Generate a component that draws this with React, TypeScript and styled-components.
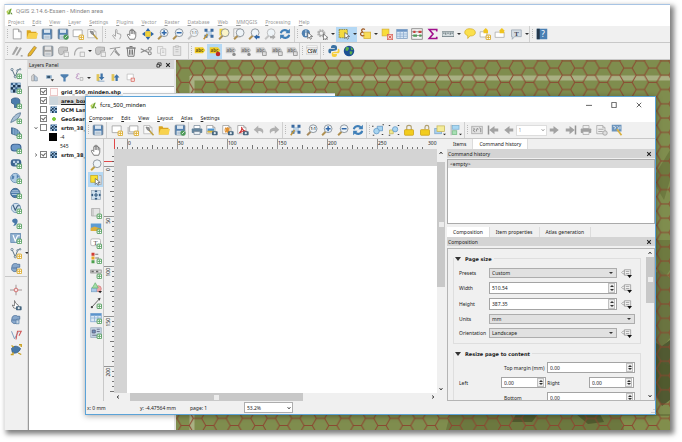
import React, { ReactNode } from "react";
import styled, { createGlobalStyle, css } from "styled-components";

const GlobalStyle = createGlobalStyle`
  *, *::before, *::after { box-sizing: border-box; }
  body { margin: 0; background: #fff; }
  body, button, input, select { font-family: "Noto Sans", "Open Sans", sans-serif; font-size: 5px; line-height: 8px; color: #222; }
`;

/* ---------- icons ---------- */

const Plus = ({ gold = false }: { gold?: boolean }) => (
  <g>
    <rect x="9.5" y="9.5" width="6" height="6" rx="1" fill="#fff" stroke={gold ? "#d8a520" : "#4d9a57"} strokeWidth="1.3" />
    <path d="M12.5 10.5v4M10.5 12.5h4" stroke={gold ? "#e0b030" : "#5fa868"} strokeWidth="1.3" />
  </g>
);
const Sheet = ({ x = 1, y = 2, fill = "#fff", stroke = "#999" }: { x?: number; y?: number; fill?: string; stroke?: string }) => (
  <path d={`M${x} ${y}h8l3 3v8h-11z M${x + 8} ${y}v3h3`} fill={fill} stroke={stroke} />
);
const Floppy = ({ c = "#5481b0", light = "#dbe6f0" }: { c?: string; light?: string }) => (
  <g>
    <rect x="1.5" y="1.5" width="13" height="13" rx="1" fill={c} stroke="#6c7f90" />
    <rect x="4" y="2" width="8" height="4.5" fill={light} />
    <rect x="3.5" y="9" width="9" height="5.5" fill={light} />
    <path d="M4.5 11h7M4.5 13h7" stroke="#8a9aa8" strokeWidth=".7" />
  </g>
);
const Lens = ({ children, fill = "#eef4f8", stroke = "#808890", handle = "#b09050" }: { children?: ReactNode; fill?: string; stroke?: string; handle?: string }) => (
  <g>
    <path d="M6.5 10 1.5 15" stroke={handle} strokeWidth="2.6" />
    <circle cx="9.5" cy="6.3" r="5.2" fill={fill} stroke={stroke} strokeWidth="1.1" />
    {children}
  </g>
);
const Vee = ({ c = "#5b7384" }: { c?: string }) => (
  <g stroke={c} fill="#dfe7ee">
    <path d="M3 4l4 9 3-8c1-2 2-2 3-2" fill="none" strokeWidth="1.3" />
    <circle cx="2.7" cy="3.4" r="1.5" /><circle cx="7" cy="13" r="1.5" /><circle cx="10" cy="4.5" r="1" /><circle cx="13.5" cy="3" r="1" />
  </g>
);
const Checker = () => (
  <g>
    <rect x="1" y="1" width="13" height="13" fill="#36608a" />
    <path d="M1 4h3v3H1zM4 1h3v3H4zM7 4h3v3H7zM10 1h4v3h-4zM4 7h3v3H4zM10 7h4v3h-4zM7 10h3v4H7zM1 10h3v4H1z" fill="#9fbfdc" />
    <path d="M4 4h3v3H4zM10 4h4v3h-4zM1 7h3v3H1zM4 10h3v4H4z" fill="#1c3650" />
  </g>
);
const Hand = ({ c = "#444", fill = "#fff" }: { c?: string; fill?: string }) => (
  <path d="M5 15 2 10c-1-2 1-2 2-1l1 1V4c0-1.500 2-1.500 2 0V2.500c0-1.500 2-1.500 2 0V4c0-1.500 2-1.300 2 0v1.500c0-1 2-1 2 .5v5l-1.500 4z M7 4v4M9 4v4M11 5.500v3" fill={fill} stroke={c} strokeWidth=".9" />
);
const Cursor = ({ x = 8, y = 6 }: { x?: number; y?: number }) => (
  <path d={`M${x} ${y}v8l2-2 1.500 3 1.500-1-1.500-2.700h3z`} fill="#fff" stroke="#555" strokeWidth=".9" />
);
const Pencil = ({ c = "#e8b62c", d = "#806020" }: { c?: string; d?: string }) => (
  <g><path d="M3 12 11 1.500l3 2-7.500 10.500-4 1z" fill={c} stroke={d} strokeWidth=".7" /></g>
);
const Cyl = () => (
  <path d="M3 4c2-3 7-2 7-1h3v4H9v5c-3 2-7 0-7-3z M3 8h6" fill="#88a8cc" stroke="#456a94" />
);
const Arr = ({ flip = false, bar = false }: { flip?: boolean; bar?: boolean }) => (
  <g transform={flip ? "translate(16 0) scale(-1 1)" : undefined}>
    <path d="M1 6h5V2.500L13 8l-7 5.500V10H1z" fill="#a2a2a2" />
    {bar && <path d="M14 2v12" stroke="#949494" strokeWidth="2" />}
  </g>
);
const Pad = ({ open = false }: { open?: boolean }) => (
  <g>
    <path d={open ? "M8 7V4c0-3 5-3 5 0v3" : "M5 8V4c0-3 6-3 6 0v4"} fill="none" stroke="#b0a070" strokeWidth="1.500" />
    <rect x="2" y="7.500" width="12" height="7.500" rx="1" fill="#f2cc1e" stroke="#c99d12" />
  </g>
);
const Camera = () => <g><rect x="8" y="9.500" width="7.500" height="5.500" rx="1" fill="#46667f" /><circle cx="11.700" cy="12.300" r="1.500" fill="#dfe8ee" /></g>;
const Label = ({ c = "#c8c8c8", t = "#777" }: { c?: string; t?: string }) => (
  <g><path d="M1 3h11l3 4-3 4H1z" fill={c} /><text x="2" y="9.200" fontSize="6" fontWeight="700" fill={t}>abc</text></g>
);
const Four = () => (
  <g fill="#3a6aa0"><path d="M4 4h8v7H4z" fill="#bcd2e6" /><path d="M2 1h4v4H2zM10 1h4v4h-4zM2 9h4v4H2zM10 9h4v4h-4z" /><path d="M6 8l-5 7" stroke="#c0963c" strokeWidth="2" /></g>
);

const icons: Record<string, ReactNode> = {
  page: <path d="M3 1.500h7L13.500 5v9.500H3z M10 1.500V5h3.500" fill="#fff" stroke="#8c8c8c" />,
  folder: <g><path d="M1 3h5l1 2h7v9H1z" fill="#d9a520" /><path d="M3.500 6.500H16L14 14H1z" fill="#f8d24e" /></g>,
  save: <Floppy />,
  saveAs: <g><Floppy /><circle cx="12" cy="12" r="3.500" fill="#4d9a57" /><path d="M10.500 13.500 14 10" stroke="#fff" /></g>,
  saveGrey: <Floppy c="#a5a5a5" light="#e5e5e5" />,
  newComp: <g><path d="M1.500 2.500h12v9h-12z" fill="#fff" stroke="#999" /><Plus gold /></g>,
  dupComp: <g><path d="M1.500 4v9h11" stroke="#999" fill="none" /><path d="M3.500 2.500h11v8h-11z" fill="#fff" stroke="#999" /><Plus gold /></g>,
  manager: <g><Sheet fill="#fafafa" stroke="#b0b0b0" /><path d="M8 8l6 7" stroke="#c0a040" strokeWidth="2" /><path d="M4 4l4 1 1 4-3-1z" fill="#999" stroke="#777" /></g>,
  touch: <path d="M6 15 2 10l1-1 3 2V3c0-1.500 2-1.500 2 0v4l5 1.500v3L11.500 15" fill="#f4f4f4" stroke="#999" strokeWidth="1.100" />,
  hand: <Hand />,
  panSel: <g fill="#2f66a8"><rect x="5" y="5" width="6" height="6" fill="#f2d43a" stroke="#c8a81c" /><path d="M8 0l3 4H5zM8 16l3-4H5zM0 8l4-3v6zM16 8l-4-3v6z" /></g>,
  zoomIn: <Lens><path d="M9.500 3v6.600M6.200 6.300h6.600" stroke="#2f66a8" strokeWidth="2" /></Lens>,
  zoomOut: <Lens><path d="M6.200 6.300h6.600" stroke="#2f66a8" strokeWidth="2" /></Lens>,
  zoomOne: <Lens handle="#c4c4c4" stroke="#aaa"><text x="6" y="8.300" fontSize="5" fontWeight="700" fill="#888">1:1</text></Lens>,
  zoomReal: <Lens handle="#a88c60"><text x="6" y="8.300" fontSize="5" fontWeight="700" fill="#444">1:1</text></Lens>,
  zoomFull: <Four />,
  zoomSel: <g><path d="M2 1h7v9H2z" fill="#f2d43a" /><Lens fill="#faf4c8" /></g>,
  zoomLayer: <g><path d="M1 1h9v11H1z" fill="#f2f2f2" stroke="#aaa" /><Lens /></g>,
  zoomLast: <g><Lens /><path d="M8 12l4-3.500v2h3.500v3H12v2z" fill="#2f66a8" /></g>,
  zoomNext: <g><Lens stroke="#b4b4b4" handle="#c4c4c4" /><path d="M15.500 12l-4-3.500v2H8v3h3.500v2z" fill="#aaa" /></g>,
  refresh: <g fill="none" stroke="#3f7fb8" strokeWidth="2.800"><path d="M2.500 7C3 3 9 1 12 5" /><path d="M13.500 9C13 13 7 15 4 11" /><path d="M14.500 1v6h-6z M1.500 15V9h6z" fill="#3f7fb8" stroke="none" /></g>,
  identify: <g><circle cx="6.500" cy="7" r="5.500" fill="#4f80b0" /><path d="M6.500 6v4.500M6.500 3.200v1.500" stroke="#fff" strokeWidth="1.800" /><Cursor x={9} /></g>,
  action: <g><circle cx="7" cy="7" r="4" fill="none" stroke="#b4b4b4" strokeWidth="3" strokeDasharray="2.200 1" /><circle cx="7" cy="7" r="3" fill="none" stroke="#aaa" strokeWidth="1.500" /><Cursor x={10} y={8} /></g>,
  select: <g><rect x="1.500" y="2" width="11" height="11" fill="#f4da3e" stroke="#7c7440" strokeDasharray="2 1" /><Cursor x={9} /></g>,
  expr: <g><rect x="6.500" y="5.500" width="9" height="8.500" fill="#f8dc58" stroke="#d8b030" /><path d="M8 2C4 0 2 3 5 5.500 0 6 2 12 7 10" fill="none" stroke="#a05a20" strokeWidth="1.600" /></g>,
  deselect: <g><rect x="1.500" y="1.500" width="9" height="9" fill="#f8dc38" stroke="#d8b030" /><rect x="8.500" y="8.500" width="7" height="7" fill="#f8ccc4" stroke="#d8645c" /><path d="M10 10l4 4M14 10l-4 4" stroke="#d04a40" /></g>,
  table: <g><rect x="1" y="2" width="14" height="12" fill="#d8e6f4" stroke="#7c9cc0" /><path d="M1 3.500h14" stroke="#6c94c4" strokeWidth="3" /><path d="M1 8h14M1 11h14M5.500 4v10M10 4v10" stroke="#8cacd0" /></g>,
  abacus: <g><rect x="1" y="1" width="14" height="14" fill="#f4f4f4" stroke="#777" /><path d="M1 5h14M1 10h14" stroke="#777" /><path d="M3 5h3M10 5h4" stroke="#c8403c" strokeWidth="3" /><path d="M3 10h5M11 10h3" stroke="#4d9a57" strokeWidth="3" /></g>,
  sigma: <path d="M13 4.500V2H3l5 6-5 6h10v-2.500" fill="none" stroke="#a0108c" strokeWidth="2.200" />,
  measure: <g><rect x="0" y="5" width="16" height="6.500" fill="#d4dcde" stroke="#66767c" /><path d="M2.500 6v2M5 6v3M8 6v2M11 6v3M13.500 6v2" stroke="#44545c" /></g>,
  bubble: <path d="M2 3c2-3 12-3 13 2s-5 6-7 5.500L5 14v-4C1 9 0 6 2 3z" fill="#fbe04c" stroke="#d4b02c" />,
  bookNew: <g><path d="M1.500 5h9v7h-9z" fill="#fff" stroke="#aaa" /><path d="M9 0l3 3v4H6V3z" fill="#f0c420" /><Plus gold /></g>,
  book: <g><path d="M1.500 5.500h12v7h-12z" fill="#fff" stroke="#aaa" /><path d="M10.500 0l3 3v4h-6V3z" fill="#f0c420" /></g>,
  text: <g><path d="M2 2.500h13v9H6L3 15v-3.500H2z" fill="#d4dce4" stroke="#98a4b0" /><text x="5.500" y="10" fontSize="9" fontWeight="700" fill="#445" fontFamily="Liberation Serif">T</text></g>,
  help: <g><rect x="1" y="1" width="14" height="14" fill="#4a80b4" /><rect x="1" y="1" width="4" height="14" fill="#24384c" /><text x="7" y="12" fontSize="11" fill="#fff">?</text></g>,
  pens: <g><path d="M1 13 7 2l3 1-6 10zM6 14l6-11 2.500 1-6 10z" fill="#a4a4a4" /><path d="M13 14.500h2.500" stroke="#555" /></g>,
  pencil: <Pencil />,
  addFeat: <g><path d="M2 6c0-5 7-3 12-3v5H9c0 3-1 5-4 5S2 9 2 6z" fill="#c8c8c8" stroke="#999" /><path d="M9.500 9.500h6v6h-6z" fill="#eee" stroke="#aaa" /></g>,
  curve: <g><path d="M2 14C2 6 6 3 13 4" fill="none" stroke="#aaa" strokeWidth="1.500" /><path d="M9.500 9.500h6v6h-6z" fill="#eee" stroke="#aaa" /></g>,
  node: <g fill="none" stroke="#999" strokeWidth="1.300"><path d="M1 5l14-2M9 4 2 14M8 5l3 5" /><path d="M8 8l6 6" strokeWidth="2.500" /></g>,
  trash: <g fill="none" stroke="#777" strokeWidth="1.300"><path d="M3 4h10l-1 11H4zM1.500 4h13M6 2h4M6 6v7M8 6v7M10 6v7" /></g>,
  cut: <g fill="none" stroke="#8c8c8c" strokeWidth="1.500"><path d="M1 5l10 5M1 10l9-4" /><circle cx="13" cy="5" r="2" /><circle cx="13" cy="11" r="2" /></g>,
  copy: <g fill="#eee" stroke="#c0c0c0"><path d="M2 2h7v9H2z" /><path d="M6 5h7v9H6zM8 8h3M8 10h3" /></g>,
  paste: <g fill="#e4e4e4" stroke="#b8b8b8"><path d="M3 2h10v12H3z" /><path d="M6 1h4v2H6zM6 6h4M6 9h4" /></g>,
  label: <Label c="#f3cf2a" t="#6a5a10" />,
  labelPin: <g><Label c="#f3cf2a" t="#6a5a10" /><circle cx="12" cy="12" r="3" fill="#c02828" /></g>,
  labelGrey: <g><Label /><circle cx="12" cy="12.500" r="2.300" fill="#8c8c8c" /></g>,
  labelMove: <g><Label /><path d="M10 9h5v5h-5z" fill="#e0e0e0" stroke="#888" /></g>,
  csw: <g><path d="M1 1h14v3H1z" fill="#fff" stroke="#ccc" /><rect x="0" y="4" width="16" height="8" fill="#fff" stroke="#bbb" /><text x="1.500" y="10.200" fontSize="6" fontWeight="700" fill="#444">CSW</text></g>,
  python: <g><path d="M8 0C4 0 4 2 4 4h5v1H2C0 5 0 11 2 11h2V9c0-2 8 0 8-4V3c0-2-2-3-4-3z" fill="#3a72a4" /><path d="M8 16c4 0 4-2 4-4H7v-1h7c2 0 2-6 0-6h-1v3c0 2-8 0-8 3v2c0 2 1 3 3 3z" fill="#f7cf3c" /></g>,
  globe: <g><circle cx="8" cy="8" r="7" fill="#1d4f94" /><path d="M4 3c3-1 4 0 4 2L6 8 3 7zM9 8l4 1-2 4-2-1zM10 2l4 4-3 1z" fill="#5cb04c" /></g>,
  vector: <g><Vee /><Plus /></g>,
  raster: <g><Checker /><Plus /></g>,
  elephant: <g><path d="M2 3c4-3 10-2 11 1v6H9v4H6v-4L2 8z" fill="#4c7cac" stroke="#31587f" /><Plus /></g>,
  feather: <g><path d="M1 14C3 7 8 2 14 1c0 5-5 10-13 13z" fill="#a8bfd4" stroke="#4c6c8c" /><Plus /></g>,
  shell: <g><path d="M2 1c8 1 12 5 12 12L2 9z" fill="#5c88b4" stroke="#31587f" /><path d="M5 2v8M8 3v8M11 5v7" stroke="#a8c4dc" /><Plus /></g>,
  oracle: <g><rect x="1.500" y="3" width="13" height="9" rx="4" fill="#6c98c8" stroke="#3c6494" strokeWidth="1.500" /><Plus /></g>,
  oraster: <g><rect x="1" y="3" width="14" height="9.500" rx="4" fill="#3c6490" /><path d="M4 5h3v3H4zM9 5h3v3H9zM6.500 8h3v3h-3z" fill="#bcd2e6" /><Plus /></g>,
  globe1: <g><circle cx="7" cy="8" r="6.200" fill="#b0cce4" stroke="#5c84ac" /><path d="M3 4l3 2-1 3-3 1M9 3l3 3-3 3" fill="#5482b0" /><Plus /></g>,
  globe2: <g><circle cx="7" cy="8" r="6.200" fill="#4c7cac" stroke="#31587f" /><path d="M1.500 7h11M2.500 10h9M3 5h8" stroke="#d0e0ee" /><Plus /></g>,
  globe3: <g><circle cx="8" cy="8" r="6.200" fill="#d0e0ee" stroke="#5c84ac" /><path d="M4 4l3 7 3-6h3" fill="none" stroke="#3c5c7c" strokeWidth="1.500" /><Plus /></g>,
  comma: <g><path d="M4 3c5-3 8 2 5 6-1 2-3 3-5 3 2-2 2-3 2-4-3 0-4-4-2-5z" fill="#4878a8" /><Plus /></g>,
  virtual: <g><rect x="1" y="2" width="13" height="12" fill="#90b0d0" stroke="#5c84ac" /><path d="M4 4l3 8 3-7h3" fill="none" stroke="#fff" strokeWidth="1.500" /><Plus /></g>,
  vectorGold: <g><Vee /><Plus gold /></g>,
  gpsGold: <g><Cyl /><Plus gold /></g>,
  cross: <g><path d="M8 1v14M0 8h16" stroke="#8c7c7c" /><circle cx="8" cy="8" r="2.500" fill="#f8e4e4" stroke="#c85050" /></g>,
  touchGps: <g><path d="M5 12 3 8l3 1V2l2 4 3 2v5z" fill="#fff" stroke="#666" /><Camera /></g>,
  gps: <g><Cyl /><path d="M8 8h4v5H8z" fill="#c4d4e4" stroke="#5c84ac" /></g>,
  topology: <g><path d="M2 3l4 10 5-9" fill="none" stroke="#7c9cc0" strokeWidth="1.300" /><path d="M8 14l2-11h5l-3 6" fill="none" stroke="#d05858" strokeWidth="1.400" /></g>,
  georef: <g><path d="M2 6c4-5 9-3 12 0-1 5-8 8-11 5z" fill="#4878a8" stroke="#31587f" /><path d="M1 14h3v-3M12 1h3v3M11 12l4 2M2 2l3 2" stroke="#c8a020" strokeWidth="1.800" fill="none" /></g>,
  print: <g><path d="M4 2h8v4H4z" fill="#fff" stroke="#7c8c9c" /><rect x="1" y="6" width="14" height="6" rx="1" fill="#64849c" /><path d="M4 10h8v4H4z" fill="#e8eef2" stroke="#7c8c9c" /></g>,
  printGrey: <g><path d="M4 2h8v4H4z" fill="#eee" stroke="#aaa" /><rect x="1" y="6" width="14" height="6" rx="1" fill="#a0a0a0" /><path d="M4 10h8v4H4z" fill="#eee" stroke="#aaa" /></g>,
  expImg: <g><Sheet /><path d="M2 6h9v5H2z" fill="#4c94d0" /><path d="M2 9h9v2.500H2z" fill="#e4b838" /><Camera /></g>,
  expSvg: <g><Sheet /><path d="M7 4v8M3 8h8M4 5l6 6M10 5l-6 6" stroke="#e09030" strokeWidth="1.500" /><Camera /></g>,
  expPdf: <g><Sheet /><path d="M3 12c3-2 4-6 3-8 1 4 4 6 7 6-4-1-7 0-10 2z" fill="none" stroke="#cc3030" strokeWidth="1.400" /><Camera /></g>,
  undo: <path d="M7 2v3c6 0 8 3 6 8-1-3-3-4-6-3.500V13L1 7.500z" fill="#b0b0b0" />,
  redo: <path d="M9 2v3C3 5 1 8 3 13c1-3 3-4 6-3.500V13l6-5.500z" fill="#b0b0b0" />,
  group: <g fill="#a8d4f0" stroke="#5c94c4"><path d="M7 3h7v6H7z" /><circle cx="6" cy="9.500" r="3.700" /><path d="M0 3h2M1 15h2M13 14h2M14 1h2" stroke="#444" strokeWidth="1.500" /></g>,
  ungroup: <g fill="#a8d4f0" stroke="#5c94c4"><path d="M2 8h5v5H2z" fill="#f0e890" stroke="#c4b458" /><circle cx="9.500" cy="7" r="3.500" /><path d="M1 2h2M1 15h2M13 14h2M13 2h2" stroke="#444" strokeWidth="1.500" /></g>,
  lock: <Pad />,
  unlock: <Pad open />,
  raise: <g><rect x="1" y="6" width="9" height="7" fill="#a8d0f0" stroke="#7ca4c8" /><rect x="4" y="2.500" width="10" height="7.500" fill="#f4ec98" stroke="#c4b458" /><path d="M12 13h4l-2 2z" fill="#222" /></g>,
  align: <g><path d="M1.500 1v14" stroke="#999" /><rect x="3" y="2" width="9" height="5" fill="#a8d8f4" stroke="#7cb0d0" /><rect x="3" y="9" width="6" height="5" fill="#a8e0b4" stroke="#74b884" /><path d="M12 13h4l-2 2z" fill="#222" /></g>,
  atlas: <g><rect x="1" y="3" width="14" height="10" fill="#e2e2e2" stroke="#a4a4a4" /><path d="M3 5l2 2-2 1 2 3M7 10l1-4 2 1M11 5l2 1v5" stroke="#8c8c8c" strokeWidth="1.300" fill="none" /></g>,
  next: <Arr />, prev: <Arr flip />, last: <Arr bar />, first: <Arr flip bar />,
  expGrey: <g><Sheet fill="#eee" stroke="#a4a4a4" /><path d="M3 7h7M3 10h6" stroke="#aaa" strokeWidth="1.500" /><circle cx="12" cy="12" r="3" fill="#ddd" stroke="#999" /></g>,
  atlasSet: <g><path d="M1 1h13v9H1z" fill="#6c94bc" /><path d="M3 3l3 1-1 3M8 3l2 2-1 3M12 3v4" stroke="#dce8f2" fill="none" strokeWidth="1.300" /><path d="M8 7l6 8" stroke="#d8b040" strokeWidth="2.300" /></g>,
  moveContent: <g><rect x="2" y="2" width="12" height="12" fill="#cfe0ee" stroke="#9ab" /><path d="M8 5v6M5 8h6" stroke="#31587f" strokeWidth="1.500" /><path d="M8 1l2 3H6zM8 15l2-3H6zM1 8l3-2v4zM15 8l-3-2v4z" fill="#31587f" /></g>,
  selItem: <g><rect x="1" y="2" width="9" height="9" fill="#f8e030" stroke="#c8a81c" /><path d="M12 2h3v12h-4" fill="#ddd" stroke="#aaa" /><Cursor x={7} y={6} /></g>,
  lens: <Lens handle="#c0a040" />,
  addMap: <g><path d="M2 2h11v10H2zM4 2v10" fill="#e4e4e4" stroke="#aaa" /><Plus /></g>,
  addImg: <g><rect x="1" y="2" width="14" height="10" fill="#5c9cd4" /><path d="M1 8l5-2 9 3v3H1z" fill="#dcae3c" /><Plus /></g>,
  addLabel: <g><rect x="1" y="2.500" width="13" height="9" rx="2" fill="#fff" stroke="#aaa" /><text x="4.500" y="10" fontSize="9" fill="#444" fontFamily="Liberation Serif">T</text><Plus /></g>,
  addLegend: <g><path d="M2 1h4v4H2z" fill="#d03c30" /><path d="M2 6h4v4H2z" fill="#e8a828" /><path d="M2 11h4v4H2z" fill="#4da04c" /><path d="M7 3h4M7 8h5" stroke="#555" /><Plus /></g>,
  addScale: <g><rect x="1" y="4" width="14" height="4" fill="#ddd" stroke="#888" /><path d="M2 6h3M8 6h3" stroke="#666" strokeWidth="2" /><Plus /></g>,
  addShape: <g><circle cx="11" cy="9" r="4" fill="#f0a8a8" stroke="#d07c7c" /><rect x="2" y="8" width="7" height="5" fill="#a8c8e8" stroke="#7ca4c8" /><path d="M7 1l4 7H3z" fill="#a4e0a8" stroke="#6cb474" /><path d="M11 12h5l-2.500 3z" fill="#222" /></g>,
  addArrow: <g><path d="M2 14 13 2" stroke="#555" strokeWidth="1.200" /><circle cx="2.500" cy="13.500" r="1.500" fill="#444" /><path d="M14 1l-1 4-3-3z" fill="#444" /><Plus /></g>,
  addTable: <g><rect x="1" y="2" width="14" height="11" fill="#dce8f4" stroke="#7ca4d0" /><path d="M1 3.500h14" stroke="#5c94cc" strokeWidth="3" /><path d="M1 8h14M6 4v9M10.500 4v9" stroke="#8cb0d4" /><Plus /></g>,
  addHtml: <g><rect x="1" y="1" width="14" height="13" fill="#c4d4e4" stroke="#9ab" /><path d="M3 4h4v4H3zM9 3h4M9 6h4M3 11h6" stroke="#557" fill="#6c94bc" /><Plus /></g>,
  styleDock: <g><path d="M3 14V5l4-3v12z" fill="#ddd" stroke="#888" /><path d="M8 4l5 4v6H8z" fill="#bcd" stroke="#789" /></g>,
  eye: <g><path d="M2 4h10v6H2z" fill="#8cacc8" /><path d="M4 5h5v4H4z" fill="#35536c" /><path d="M10 11h6l-3 4z" fill="#333" /></g>,
  filter: <path d="M1 2h14v3L10 9v6H6V9L1 5z" fill="#4f80b0" />,
  exprFilter: <g fill="none"><path d="M8 2C4 0 2 3 5 5.500 0 6 2 12 7 10" stroke="#b080b8" strokeWidth="1.600" /><path d="M9 8h5v5H9z" stroke="#999" /></g>,
  expand: <g><path d="M1 2h5v12H1z" fill="#e0c458" /><path d="M8 1h4v6h3l-5 6-5-6h3z" fill="#3f73a8" /><path d="M3 14.500h12" stroke="#3f73a8" /></g>,
  collapse: <g><path d="M1 2h5v12H1z" fill="#e0c458" /><path d="M8 14h4V8h3l-5-6-5 6h3z" fill="#3f73a8" /></g>,
  remove: <g><path d="M2 2h11v10H2z" fill="#fff" stroke="#aaa" /><rect x="9" y="9" width="6" height="6" fill="#f8d8d4" stroke="#d04a40" /></g>,
  dataDef: <g fill="none"><path d="M5 2.500h9v8H5zM5 4.500H3l-2 2 2 2h2M7 5h5M7 8h5" stroke="#8c8c8c" /><path d="M9 10h7l-3.500 4.500z" fill="#111" /></g>,
  checker: <Checker />,
};

const Svg = styled.svg<{ $s: number }>`
  display: block;
  flex: none;
  width: ${(p) => p.$s}px;
  height: ${(p) => p.$s}px;
`;
const Icon = ({ name, size = 12 }: { name: string; size?: number }) => (
  <Svg viewBox="0 0 16 16" $s={size} aria-hidden="true">{icons[name]}</Svg>
);
const Logo = () => (
  <Svg viewBox="0 0 16 16" $s={7} aria-hidden="true">
    <path d="M3 15 9 2l4-1-4 13z" fill="#76a832" /><path d="M1 8l6-5-4 12z" fill="#b4cc50" /><path d="M11 9l4 5h-4z" fill="#4a7c24" />
  </Svg>
);

/* ---------- shared parts ---------- */

const Desktop = styled.div`
  display: flex;
  height: 100vh;
  padding: 4px 12px 12px 4px;
`;
const MainWindow = styled.main`
  position: relative;
  display: flex;
  flex-direction: column;
  flex: 1;
  min-width: 0;
  background: #fff;
  border-top: 1px solid #a8c4e4;
  border-left: 1px solid #e4e4e4;
  box-shadow: 3px 3px 5px 1px rgba(0, 0, 0, 0.5);
`;
const TitleBar = styled.header<{ $tall?: boolean; $muted?: boolean }>`
  display: flex;
  align-items: center;
  flex: none;
  gap: 3px;
  height: ${(p) => (p.$tall ? 16 : 12)}px;
  padding: 0 5px 0 ${(p) => (p.$tall ? 4 : 1)}px;
  font-family: Roboto, sans-serif;
  font-size: 6px;
  color: ${(p) => (p.$muted ? "#888" : "#222")};
`;
const TitleText = styled.h1`
  flex: 1;
  margin: 0;
  font-size: inherit;
  font-weight: 400;
`;
const WinButton = styled.button`
  width: 22px;
  height: 12px;
  padding: 0;
  display: grid;
  place-items: center;
  border: 0;
  background: none;
`;
const MenuBar = styled.nav<{ $muted?: boolean }>`
  display: flex;
  flex: none;
  gap: 8px;
  padding-left: 3px;
  height: 9px;
  button { padding: 0; border: 0; background: none; color: ${(p) => (p.$muted ? "#999" : "#222")}; }
  button::first-letter { text-decoration: underline; }
`;
const Bar = styled.div`
  display: flex;
  flex: none;
  height: 17px;
  background: #f0f0f0;
  border-bottom: 1px solid #c8c8c8;
`;
const Group = styled.div<{ $w: number; $l?: number; $r?: number; $plain?: boolean; $last?: boolean }>`
  display: flex;
  align-items: center;
  justify-content: space-between;
  flex: none;
  width: ${(p) => p.$w}px;
  padding: 0 ${(p) => p.$r ?? 2}px 0 ${(p) => p.$l ?? 6}px;
  border-right: ${(p) => (p.$last ? 0 : 1)}px solid #d0d0d0;
  ${(p) => !p.$plain && css`background: repeating-linear-gradient(#bbb 0 1px, transparent 1px 2px) 2px 3px / 1px 10px no-repeat;`}
`;
const Tool = styled.button<{ $on?: boolean; $drop?: boolean }>`
  display: flex;
  align-items: center;
  flex: none;
  width: ${(p) => (p.$drop ? 21 : 15)}px;
  height: 15px;
  padding: 0 2px;
  gap: 3px;
  border: 0;
  background: ${(p) => (p.$on ? "#b4d8f4" : "none")};
`;
const Caret = styled.i`
  flex: none;
  border: 2px solid transparent;
  border-bottom-width: 0;
  border-top-color: #333;
`;
/* Tool names separated by spaces; "*" marks a pressed tool, "+" one with a menu. */
const tools = (spec: string) =>
  spec.split(" ").map((t, i) => {
    const name = t.replace(/[*+]/g, "");
    const drop = t.includes("+");
    return (
      <Tool key={i} $on={t.includes("*")} $drop={drop} aria-label={name}>
        <Icon name={name} />
        {drop && <Caret />}
      </Tool>
    );
  });

/* ---------- main window body ---------- */

const Body = styled.div`
  display: flex;
  flex: 1;
  min-height: 0;
`;
const SideTools = styled.div`
  display: flex;
  flex-direction: column;
  flex: none;
  width: 23px;
  padding-top: 5px;
  background: #f0f0f0;
  border-right: 1px solid #dcdcdc;
`;
const SideGroup = styled.div`
  display: flex;
  flex-direction: column;
  padding: 0 0 0 3px;
  & + & { margin-top: 1px; padding-top: 5px; border-top: 1px solid #c8c8c8; }
`;
const Layers = styled.section`
  display: flex;
  flex-direction: column;
  flex: none;
  width: 148px;
  border-right: 2px solid #e4e4e4;
`;
const DockTitle = styled.header`
  display: flex;
  align-items: center;
  justify-content: space-between;
  flex: none;
  height: 9px;
  padding: 0 3px 0 1px;
  background: #d4d4d4;
  h2 { margin: 0; font-size: 5px; font-weight: 400; }
  span { display: flex; gap: 3px; }
  button { display: grid; padding: 0; border: 0; background: none; }
`;
const LayerTools = styled.div`
  display: flex;
  align-items: center;
  flex: none;
  gap: 3px;
  height: 17px;
  padding-left: 1px;
  background: #f0f0f0;
  button { width: 12px; padding: 0 1px; }
  button:nth-child(4) { width: 18px; }
`;
const Tree = styled.ul`
  flex: 1;
  margin: 0;
  padding: 0 0 0 3px;
  list-style: none;
  background: #fff;
  border-left: 1px solid #999;
  border-top: 1px solid #aaa;
`;
const TreeRow = styled.li<{ $bold?: boolean; $sel?: boolean }>`
  display: flex;
  align-items: center;
  gap: 2px;
  height: 9px;
  white-space: nowrap;
  ${(p) => p.$bold && css`font-family: "DejaVu Sans", sans-serif; font-weight: 700;`}
  > b { width: 6px; display: grid; place-items: center; }
  label { display: flex; align-items: center; gap: 3px; flex: 1; height: 9px;
    ${(p) => p.$sel && css`text-decoration: underline; background: linear-gradient(90deg, transparent 9px, #dadada 9px);`} }
`;
const Check = styled.input`
  appearance: none;
  position: relative;
  flex: none;
  width: 7px;
  height: 7px;
  margin: 0;
  background: #fff;
  border: 1px solid #808080;
  &:checked::after {
    content: "";
    position: absolute;
    left: 1px;
    top: 0;
    width: 3px;
    height: 4px;
    border: solid #666;
    border-width: 0 1px 1px 0;
    transform: rotate(40deg);
  }
`;
const Swatch = styled.span<{ $c: string; $b?: string; $dot?: boolean }>`
  flex: none;
  width: ${(p) => (p.$dot ? 4 : 8)}px;
  height: ${(p) => (p.$dot ? 4 : 8)}px;
  margin: 0 ${(p) => (p.$dot ? 2 : 0)}px;
  border-radius: ${(p) => (p.$dot ? 50 : 0)}%;
  background: ${(p) => p.$c};
  border: 1px solid ${(p) => p.$b ?? p.$c};
`;
const Legend = styled(TreeRow)`
  gap: 3px;
  padding-left: 17px;
`;
const MapView = styled.svg`
  display: block;
  flex: 1;
  min-width: 0;
  height: 100%;
  background: #7f8d4e;
`;

const MapCanvas = () => (
  <MapView viewBox="0 0 494 370" preserveAspectRatio="xMinYMin slice" aria-label="Map canvas">
    <defs>
      <pattern id="hex" width="24.6" height="14.3" patternUnits="userSpaceOnUse" patternTransform="translate(58.4 0.9)">
        <path d="M0 7.150h4.100L8.200 0h8.200l4.100 7.150h4.100M4.100 7.150l4.100 7.150h8.200l4.100-7.150" fill="none" stroke="#8c4630" strokeWidth="1" />
      </pattern>
    </defs>
    <rect width="494" height="370" fill="#7f8d4e" />
    <path d="M14 18h480M16 16v354" stroke="#a9b083" strokeWidth="5" fill="none" />
    <path d="M270 370l4-16h220v16z" fill="#6c783f" />
    <path d="M476 120l18-30v30l-6 20zM478 180h16v30l-10 14z" fill="#6e7a40" />
    <path d="M476 215l8-5 10 8v60l-8 10-10-8z" fill="#6a7440" />
    <path d="M478 282l8 4 8-6v60l-8 6-8-14z" fill="#515a32" />
    <path d="M480 300l14 6v24l-14-4zM340 354h22l-6 8h-20zM400 354h24l4 8-16 2z" fill="#505a2e" />
    <path d="M444 356h50v14h-46z" fill="#818e4c" />
    <rect width="494" height="370" fill="url(#hex)" />
  </MapView>
);

/* ---------- composer window ---------- */

const Composer = styled.section`
  position: absolute;
  inset: 91px 14px 15px 80px;
  display: flex;
  flex-direction: column;
  background: #f0f0f0;
  border: 1px solid #5ba3d8;
  box-shadow: 0 1px 6px rgba(0, 0, 0, 0.35);
  &::before {
    content: "";
    position: absolute;
    left: 37px;
    top: -4px;
    width: 212px;
    height: 3px;
    background: #f2f6fa;
    border-top: 1px solid #c4c8cc;
  }
`;
const WhiteTop = styled.div`
  flex: none;
  background: #fff;
`;
const ComposerBody = styled.div`
  display: flex;
  flex: 1;
  min-height: 0;
`;
const ToolBox = styled.div`
  display: flex;
  flex-direction: column;
  flex: none;
  width: 18px;
  padding: 3px 0 0 2px;
  border-right: 1px solid #c8c8c8;
  button:nth-child(5) { margin-top: 3px; }
`;
const View = styled.div`
  display: grid;
  grid-template: 10px 1fr 8px / 10px 1fr 8px;
  flex: 1;
  min-width: 0;
`;
const Ruler = styled.svg`
  display: block;
  width: 100%;
  height: 100%;
  min-width: 0;
  min-height: 0;
`;
const Pasteboard = styled.div`
  display: flex;
  min-width: 0;
  min-height: 0;
  padding: 17px 0 0 13px;
  background: #d4d4d4;
`;
const Paper = styled.div`
  flex: 1;
  background: #fff;
`;
const Scroll = styled.div<{ $h?: boolean }>`
  display: flex;
  flex-direction: ${(p) => (p.$h ? "row" : "column")};
  align-items: center;
  background: #f0f0f0;
`;
const Track = styled.div<{ $h?: boolean; $start?: number }>`
  display: flex;
  flex-direction: ${(p) => (p.$h ? "row" : "column")};
  flex: 1;
  align-self: stretch;
  padding: ${(p) => (p.$h ? `0 0 0 ${p.$start ?? 0}px` : `${p.$start ?? 0}px 0 0`)};
`;
const Thumb = styled.div<{ $size: number }>`
  display: grid;
  place-items: center;
  flex: 0 0 ${(p) => p.$size}%;
  background: #c8c8c8;
  &::after { content: ""; width: 5px; height: 5px; background: #ececec; }
`;
const Chevron = styled.svg<{ $turn: number }>`
  flex: none;
  width: 8px;
  height: 8px;
  padding: 2px;
  transform: rotate(${(p) => p.$turn}deg);
`;
const Chev = ({ turn = 0, c = "#333" }: { turn?: number; c?: string }) => (
  <Chevron viewBox="0 0 8 8" $turn={turn}><path d="M1 6l3-4 3 4" fill="none" stroke={c} strokeWidth="1.800" /></Chevron>
);
const Cross = () => (
  <Svg viewBox="0 0 10 10" $s={6}><path d="M2 2l6 6M8 2l-6 6" stroke="#222" strokeWidth="1.800" /></Svg>
);

const ticks = Array.from({ length: 62 }, (_, i) => i - 2);
const tickLength = (i: number) => (i % 10 === 0 ? 10 : i % 5 === 0 ? 4 : 2);
const HRuler = () => (
  <Ruler>
    <path d="M0.500 0v10" stroke="#e04848" />
    {ticks.map((i) => <path key={i} d={`M${13.5 + i * 5} 10v-${tickLength(i)}`} stroke="#555" strokeWidth={i % 10 ? 0.8 : 0.6} />)}
    {[0, 50, 100, 150, 200, 250, 300].map((n) => <text key={n} x={14 + n} y="6" fontSize="5" fill="#222">{n}</text>)}
  </Ruler>
);
const VRuler = () => (
  <Ruler>
    <path d="M0 12.500h10" stroke="#e04848" />
    {ticks.slice(0, 50).map((i) => <path key={i} d={`M10 ${17.5 + i * 5}h-${tickLength(i)}`} stroke="#555" strokeWidth={i % 10 ? 0.8 : 0.6} />)}
    {[0, 50, 100, 150, 200].map((n) => (
      <text key={n} transform={`translate(6 ${19 + n}) rotate(-90)`} textAnchor="end" fontSize="5" fill="#222">{n}</text>
    ))}
  </Ruler>
);

const Docks = styled.aside`
  display: flex;
  flex-direction: column;
  flex: none;
  width: 210px;
  padding-left: 2px;
`;
const Tabs = styled.div<{ $gap?: boolean }>`
  display: flex;
  flex: none;
  height: 10px;
  margin-top: ${(p) => (p.$gap ? 3 : 0)}px;
`;
const Tab = styled.button<{ $on?: boolean }>`
  padding: 0 6px;
  border: 0;
  border-right: 1px solid #dcdcdc;
  background: ${(p) => (p.$on ? "#fff" : "transparent")};
`;
const History = styled.ul`
  flex: none;
  height: 65px;
  margin: 1px 0 0;
  padding: 0;
  list-style: none;
  background: #fff;
  border: 1px solid #aaa;
  li { padding-left: 2px; background: #dadada; }
`;
const Pane = styled.div`
  display: flex;
  flex: 1;
  min-height: 0;
  margin-top: 2px;
  overflow: hidden;
  border: 1px solid #b4b4b4;
`;
const Form = styled.form`
  flex: 1;
  min-width: 0;
  height: 0;
  padding: 4px 5px 0;
`;
const Field = styled.fieldset<{ $gap: number; $top: number }>`
  display: flex;
  flex-direction: column;
  gap: ${(p) => p.$gap}px;
  margin: 0 0 4px;
  padding: ${(p) => p.$top}px 5px 5px;
  border: 1px solid #dedede;
  legend { display: flex; align-items: center; gap: 4px; padding: 0 2px 0 1px; margin-left: -5px; height: 11px; font-family: "DejaVu Sans", sans-serif; font-weight: 700; }
  legend i { border-width: 4px 3px 0; }
`;
const Row = styled.div`
  display: flex;
  align-items: center;
  label { flex: none; width: 30px; }
`;
const Choice = styled.span<{ $w?: number }>`
  display: grid;
  flex: ${(p) => (p.$w ? `0 0 ${p.$w}px` : "1")};
  align-items: center;
  > * { grid-area: 1 / 1; }
  > i { justify-self: end; margin-right: 4px; pointer-events: none; }
  > svg { justify-self: end; pointer-events: none; }
`;
const Select = styled.select<{ $white?: boolean; $dim?: boolean }>`
  appearance: none;
  width: 100%;
  height: ${(p) => (p.$white ? 11 : 10)}px;
  padding: 0 2px;
  color: ${(p) => (p.$dim ? "#999" : "#222")};
  background: ${(p) => (p.$white ? "#fff" : "#e1e1e1")};
  border: 1px solid ${(p) => (p.$dim ? "#ddd" : "#adadad")};
  border-radius: 0;
`;
const Spin = styled.span<{ $w?: number; $tall?: boolean }>`
  display: flex;
  align-items: center;
  flex: ${(p) => (p.$w ? `0 0 ${p.$w}px` : "1")};
  height: ${(p) => (p.$tall ? 12 : 11)}px;
  padding-right: 1px;
  background: #fff;
  border: 1px solid #a4a4a4;
  input { flex: 1; min-width: 0; padding: 0 2px; border: 0; background: none; outline: 0; }
`;
const SpinButtons = styled.span`
  display: flex;
  flex-direction: column;
  align-items: center;
  justify-content: space-evenly;
  align-self: stretch;
  width: 7px;
  background: #ececec;
  border: 1px solid #c0c0c0;
  i { border-width: 2px 2px 0; }
  i:first-child { transform: rotate(180deg); }
`;
const DataButton = styled.button`
  flex: none;
  width: 18px;
  height: 10px;
  padding: 0 0 0 4px;
  border: 0;
  background: none;
`;
const Margins = styled.div`
  display: grid;
  grid-template-columns: 42px 45px 1fr 45px;
  align-items: center;
  row-gap: 4px;
  margin-right: 1px;
  label { padding-right: 3px; }
`;
const MarginCell = styled.div`
  grid-column: 2 / -1;
  display: flex;
  align-items: center;
  padding-left: 3px;
  label { flex: none; width: 43px; padding: 0; white-space: nowrap; }
`;
const Status = styled.footer`
  display: flex;
  align-items: center;
  flex: none;
  height: 13px;
  gap: 14px;
  padding-left: 1px;
  > output:nth-child(1) { width: 39px; }
  > output:nth-child(3) { width: 40px; }
  > svg { margin-left: auto; align-self: flex-end; }
`;

const Selector = ({ id, value, w, dim, white }: { id: string; value: string; w?: number; dim?: boolean; white?: boolean }) => (
  <Choice $w={w}>
    <Select id={id} aria-label={id} $dim={dim} $white={white} defaultValue={value}><option>{value}</option></Select>
    {white ? <Chev turn={180} c={dim ? "#aaa" : "#555"} /> : <Caret />}
  </Choice>
);
const NumberField = ({ id, value, w, tall }: { id: string; value: string; w?: number; tall?: boolean }) => (
  <Spin $w={w} $tall={tall}>
    <input id={id} defaultValue={value} />
    <SpinButtons><Caret /><Caret /></SpinButtons>
  </Spin>
);
const DataDefined = () => <DataButton type="button" aria-label="Data defined override"><Icon name="dataDef" size={11} /></DataButton>;

const ComposerWindow = () => (
  <Composer>
    <WhiteTop>
      <TitleBar $tall>
        <Logo />
        <TitleText>fcrs_500_minden</TitleText>
        <WinButton aria-label="Minimize"><Svg viewBox="0 0 8 8" $s={6}><path d="M0 4.500h8" stroke="#333" /></Svg></WinButton>
        <WinButton aria-label="Maximize"><Svg viewBox="0 0 8 8" $s={6}><path d="M1 .5h6v7H1z" stroke="#333" fill="none" /></Svg></WinButton>
        <WinButton aria-label="Close"><Svg viewBox="0 0 8 8" $s={6}><path d="M1 1l6 6M7 1L1 7" stroke="#333" /></Svg></WinButton>
      </TitleBar>
      <MenuBar>
        {["Composer", "Edit", "View", "Layout", "Atlas", "Settings"].map((m) => <button key={m}>{m}</button>)}
      </MenuBar>
    </WhiteTop>
    <Bar>
      <Group $w={21} $l={4} $r={1}>{tools("save")}</Group>
      <Group $w={82} $l={2} $r={1} $plain>{tools("newComp dupComp manager folder saveAs")}</Group>
      <Group $w={94} $l={0} $r={1} $plain>{tools("print expImg expSvg expPdf undo redo")}</Group>
      <Group $w={84} $l={5} $r={1}>{tools("zoomFull zoomReal zoomIn zoomOut refresh")}</Group>
      <Group $w={98} $l={3} $r={1}>{tools("group ungroup lock unlock raise align")}</Group>
      <Group $w={160} $l={4} $r={1} $last>
        {tools("atlas first prev")}
        <Selector id="Atlas page" value="1" w={31} dim white />
        {tools("next last printGrey expGrey atlasSet")}
      </Group>
    </Bar>
    <ComposerBody>
      <ToolBox>{tools("hand lens selItem* moveContent addMap addImg addLabel addLegend addScale addShape addArrow addTable addHtml")}</ToolBox>
      <View>
        <span />
        <HRuler />
        <span />
        <VRuler />
        <Pasteboard><Paper /></Pasteboard>
        <Scroll>
          <Chev />
          <Track $start={5}><Thumb $size={56} /></Track>
          <Chev turn={180} />
        </Scroll>
        <span />
        <Scroll $h>
          <Chev turn={-90} />
          <Track $h $start={8}><Thumb $size={58} /></Track>
          <Chev turn={90} />
        </Scroll>
        <span />
      </View>
      <Docks>
        <Tabs><Tab>Items</Tab><Tab $on>Command history</Tab></Tabs>
        <DockTitle><h2>Command history</h2><button aria-label="Close panel"><Cross /></button></DockTitle>
        <History><li>&lt;empty&gt;</li></History>
        <Tabs $gap><Tab $on>Composition</Tab><Tab>Item properties</Tab><Tab>Atlas generation</Tab></Tabs>
        <DockTitle><h2>Composition</h2><button aria-label="Close panel"><Cross /></button></DockTitle>
        <Pane>
          <Form>
            <Field $gap={4} $top={4}>
              <legend><Caret />Page size</legend>
              <Row><label htmlFor="presets">Presets</label><Selector id="presets" value="Custom" /><DataDefined /></Row>
              <Row><label htmlFor="width">Width</label><NumberField id="width" value="510.54" tall /><DataDefined /></Row>
              <Row><label htmlFor="height">Height</label><NumberField id="height" value="387.35" tall /><DataDefined /></Row>
              <Row><label htmlFor="units">Units</label><Selector id="units" value="mm" /></Row>
              <Row><label htmlFor="orientation">Orientation</label><Selector id="orientation" value="Landscape" /><DataDefined /></Row>
            </Field>
            <Field $gap={0} $top={3}>
              <legend><Caret />Resize page to content</legend>
              <Margins>
                <MarginCell><label htmlFor="top">Top margin (mm)</label><NumberField id="top" value="0.00" w={45} /></MarginCell>
                <label htmlFor="left">Left</label><NumberField id="left" value="0.00" />
                <label htmlFor="right">&nbsp;Right</label><NumberField id="right" value="0.00" />
                <MarginCell><label htmlFor="bottom">Bottom</label><NumberField id="bottom" value="0.00" w={45} /></MarginCell>
              </Margins>
            </Field>
          </Form>
          <Scroll>
            <Chev />
            <Track><Thumb $size={34} /></Track>
            <Chev turn={180} />
          </Scroll>
        </Pane>
      </Docks>
    </ComposerBody>
    <Status>
      <output>x: 0 mm</output>
      <output>y: -4.47564 mm</output>
      <output>page: 1</output>
      <Selector id="Zoom" value="53.2%" w={49} white />
      <Svg viewBox="0 0 6 6" $s={6}><path d="M5 1v1M5 4v1M3 4v1" stroke="#aaa" /></Svg>
    </Status>
  </Composer>
);

const Layer = ({ name, on, sel, arrow, children }: { name: string; on?: boolean; sel?: boolean; arrow?: number; children: ReactNode }) => (
  <TreeRow $bold $sel={sel}>
    <b>{arrow !== undefined && <Chev turn={arrow} c="#777" />}</b>
    <label><Check type="checkbox" defaultChecked={on} />{children}{name}</label>
  </TreeRow>
);

export default function App() {
  return (
    <Desktop>
      <GlobalStyle />
      <MainWindow>
        <TitleBar $muted><Logo /><TitleText>QGIS 2.14.6-Essen - Minden area</TitleText></TitleBar>
        <MenuBar $muted>
          {["Project", "Edit", "View", "Layer", "Settings", "Plugins", "Vector", "Raster", "Database", "Web", "MMQGIS", "Processing", "Help"].map((m) => (
            <button key={m}>{m}</button>
          ))}
        </MenuBar>
        <Bar>
          <Group $w={98} $l={4}>{tools("page folder save saveAs newComp manager")}</Group>
          <Group $w={192}>{tools("touch hand panSel zoomIn zoomOut zoomOne zoomFull zoomSel zoomLayer zoomLast zoomNext refresh")}</Group>
          <Group $w={235} $l={4} $r={0}>{tools("identify action+ select*+ expr+ deselect table abacus sigma measure+ bubble bookNew book text+")}</Group>
          <Group $w={24} $l={4} $last>{tools("help")}</Group>
        </Bar>
        <Bar>
          <Group $w={184} $l={4} $r={4}>{tools("pens pencil saveGrey addFeat curve+ addFeat node trash cut copy paste")}</Group>
          <Group $w={111} $l={3} $r={0}>{tools("label labelPin* labelGrey labelGrey labelMove labelMove labelMove")}</Group>
          <Group $w={21} $l={4} $r={1}>{tools("csw")}</Group>
          <Group $w={36} $l={5} $r={1} $last>{tools("python globe")}</Group>
        </Bar>
        <Body>
          <SideTools>
            <SideGroup>{tools("vector raster elephant feather shell oracle oraster globe1 globe2 globe3 comma virtual vectorGold+ gpsGold")}</SideGroup>
            <SideGroup>{tools("cross touchGps gps topology georef")}</SideGroup>
          </SideTools>
          <Layers>
            <DockTitle>
              <h2>Layers Panel</h2>
              <span>
                <button aria-label="Float panel"><Svg viewBox="0 0 10 10" $s={6}><path d="M3 4V1.500h5.500V6H6M1.500 4H6v4.500H1.500z" fill="none" stroke="#222" strokeWidth="1.300" /></Svg></button>
                <button aria-label="Close panel"><Cross /></button>
              </span>
            </DockTitle>
            <LayerTools>{["styleDock", "eye", "filter", "exprFilter", "expand", "collapse", "remove"].map((n) => (
              <Tool key={n} aria-label={n} $drop={n === "exprFilter"}><Icon name={n} size={9} />{n === "exprFilter" && <Caret />}</Tool>
            ))}</LayerTools>
            <Tree>
              <Layer name="grid_500_minden.shp" on><Swatch $c="#fffafa" $b="#ecc8c8" /></Layer>
              <Layer name="area_box" on sel><Swatch $c="#ccd6dc" /></Layer>
              <Layer name="OCM Landscape"><Icon name="checker" size={8} /></Layer>
              <Layer name="GeoSearch" on><Swatch $c="#7cc838" $dot /></Layer>
              <Layer name="srtm_38_02" arrow={180}><Icon name="checker" size={8} /></Layer>
              <Legend><Swatch $c="#000" />-4</Legend>
              <Legend><Swatch $c="#fff" />545</Legend>
              <Layer name="srtm_38_03" on arrow={90}><Icon name="checker" size={8} /></Layer>
            </Tree>
          </Layers>
          <MapCanvas />
        </Body>
        <ComposerWindow />
      </MainWindow>
    </Desktop>
  );
}
